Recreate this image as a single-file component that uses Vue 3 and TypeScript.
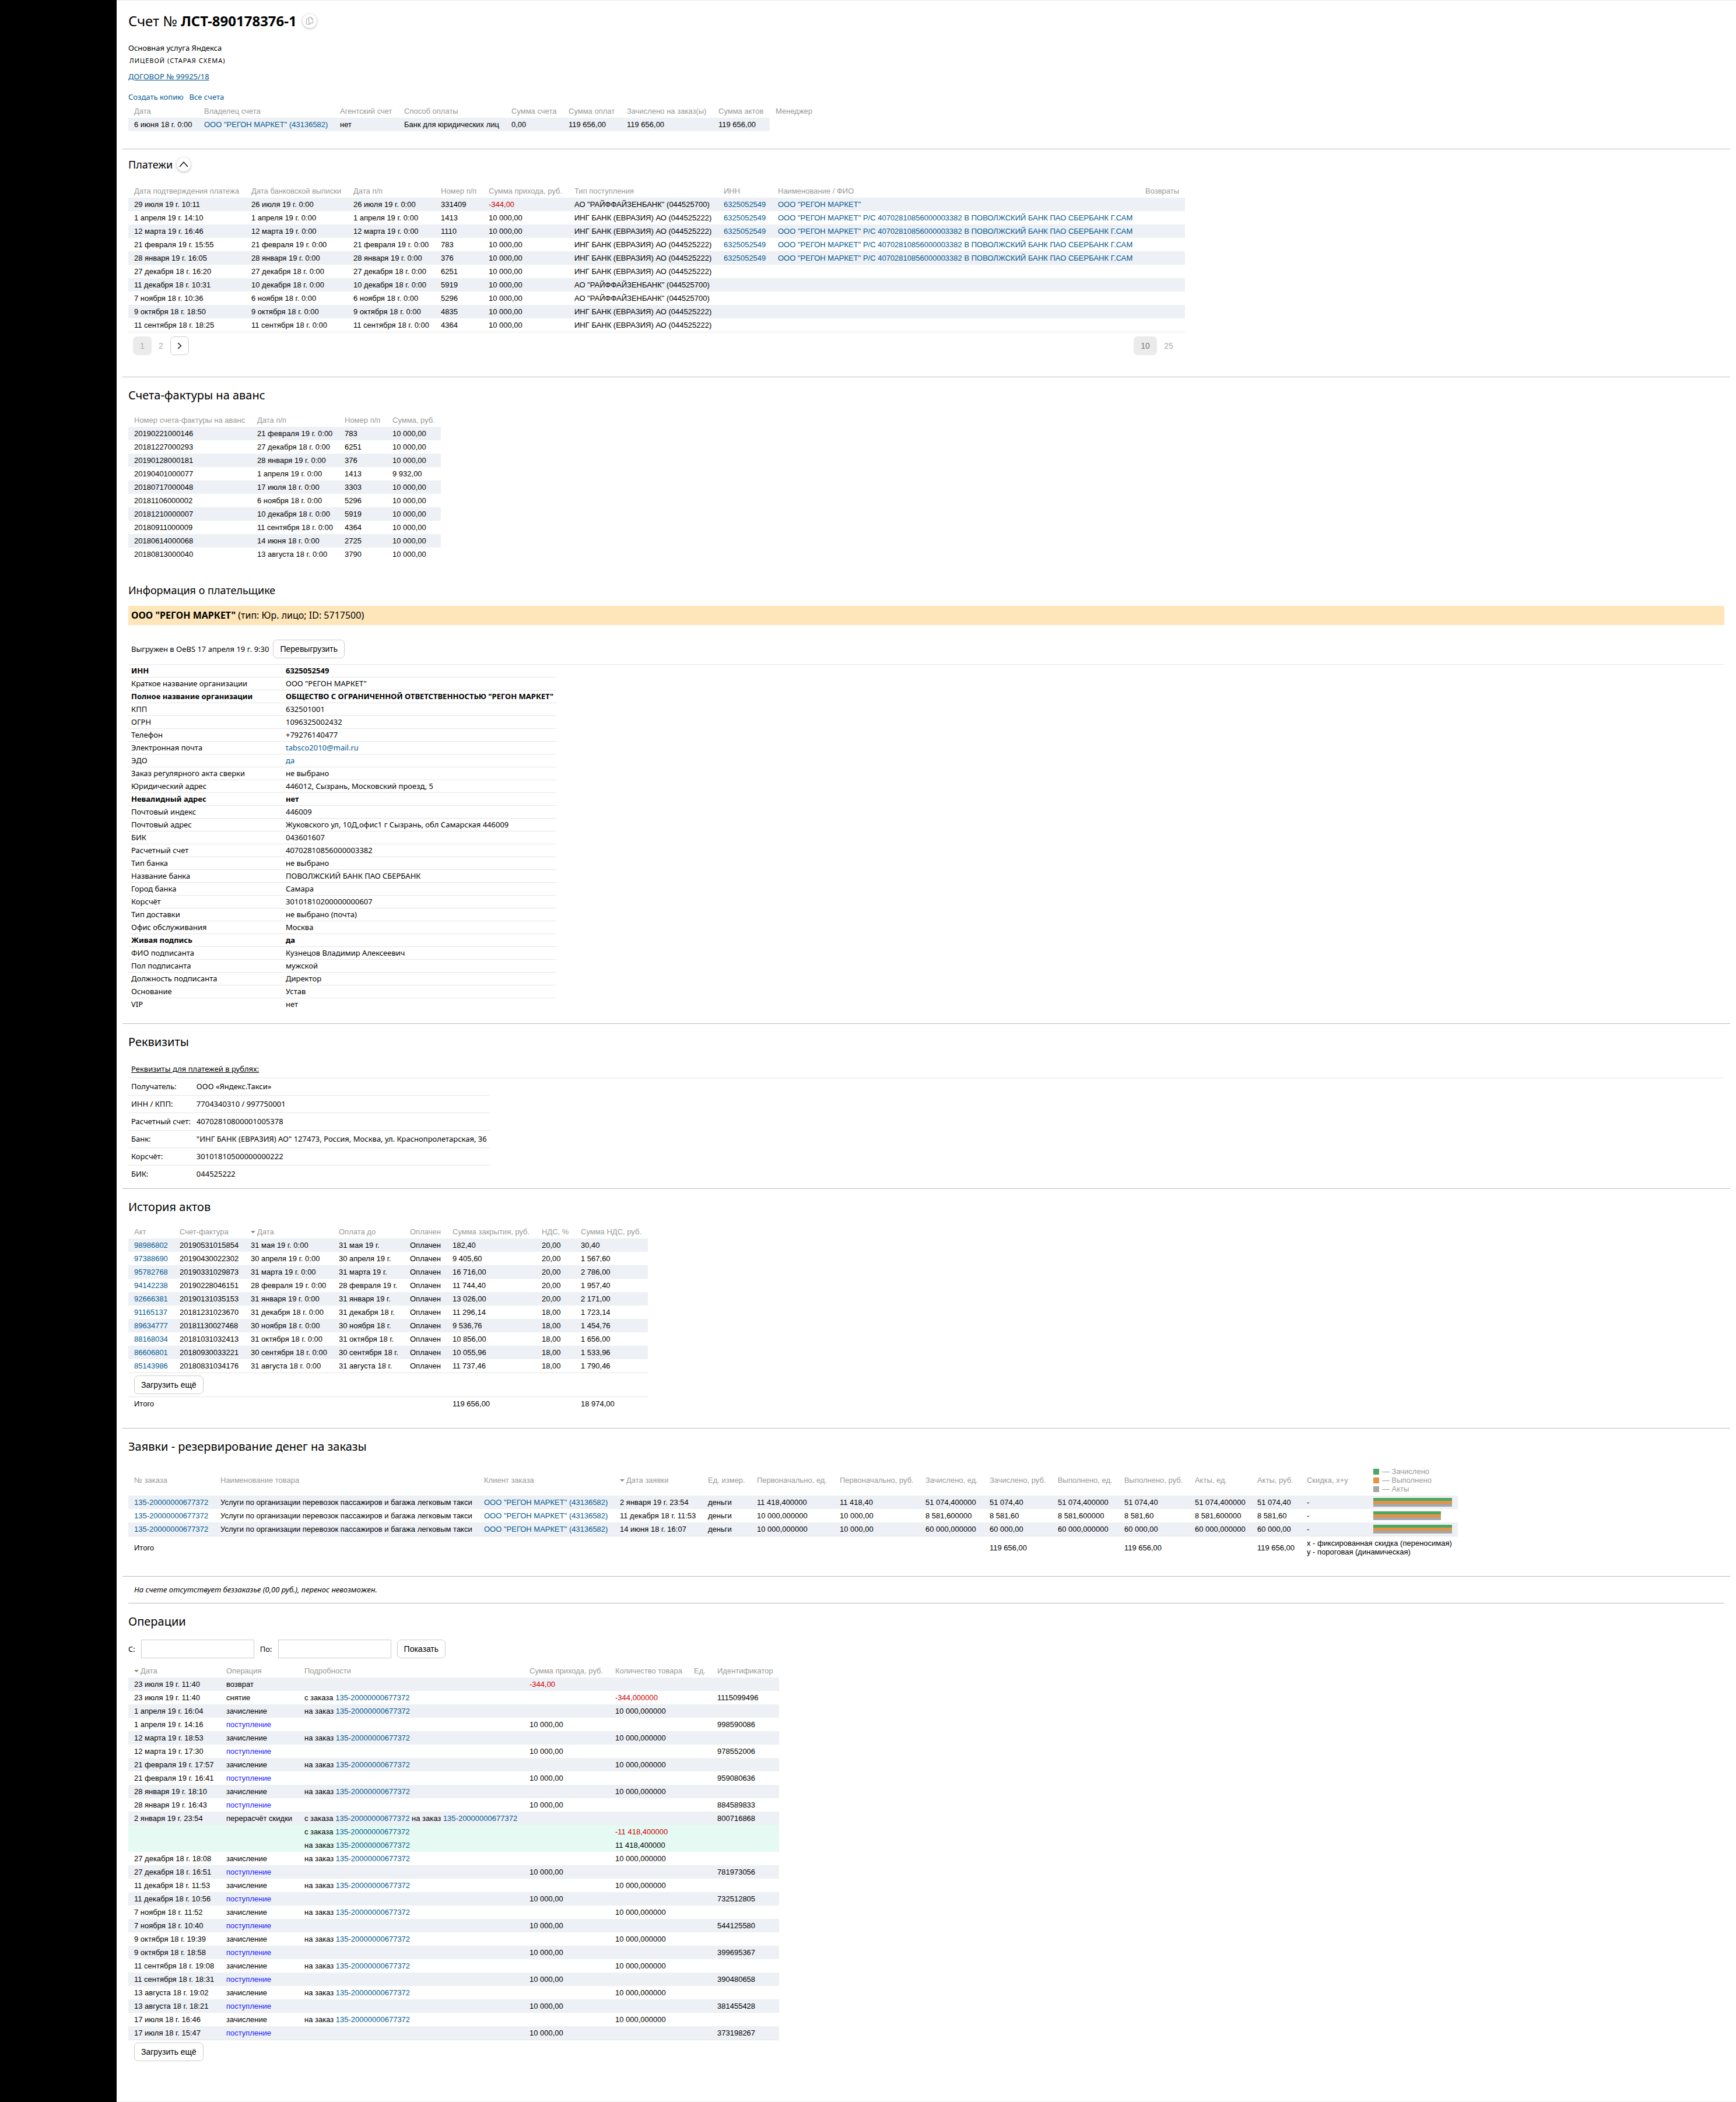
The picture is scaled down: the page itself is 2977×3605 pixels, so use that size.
<script setup lang="ts">
import { ref } from 'vue'

interface Payment {
  confirmed: string
  statement: string
  order: string
  num: string
  sum: string
  type: string
  inn: string
  name: string
}

interface Order {
  date: string
  initial: string
  credited: string
  share: number
}

interface Operation {
  date: string
  kind: string
  details: string[]
  sum: string
  qty: string
  id: string
  sub?: boolean
}

const ORDER_ID = '135-20000000677372'
const CLIENT = 'ООО "РЕГОН МАРКЕТ" (43136582)'
const ING = 'ИНГ БАНК (ЕВРАЗИЯ) АО (044525222)'
const RAIF = 'АО "РАЙФФАЙЗЕНБАНК" (044525700)'
const INN = '6325052549'
const PAYER = 'ООО "РЕГОН МАРКЕТ"'
const PAYER_FULL = 'ООО "РЕГОН МАРКЕТ" Р/С 40702810856000003382 В ПОВОЛЖСКИЙ БАНК ПАО СБЕРБАНК Г.САМ'

const isNegative = (value: string): boolean => value.startsWith('-')

/* column widths of the data tables, in pixels */
const columns = {
  summary: [120, 233, 110, 184, 98, 100, 157, 98, 90],
  payments: [201, 175, 150, 82, 147, 256, 93, 630, 78],
  invoices: [211, 150, 82, 83],
  acts: [78, 122, 151, 122, 73, 153, 67, 125],
  orders: [148, 452, 233, 151, 84, 142, 147, 109, 117, 114, 121, 107, 85, 114, 155],
  operations: [158, 134, 386, 147, 135, 40, 106],
}

const summaryHead = ['Дата', 'Владелец счета', 'Агентский счет', 'Способ оплаты', 'Сумма счета', 'Сумма оплат', 'Зачислено на заказ(ы)', 'Сумма актов', 'Менеджер']

const paymentHead = ['Дата подтверждения платежа', 'Дата банковской выписки', 'Дата п/п', 'Номер п/п', 'Сумма прихода, руб.', 'Тип поступления', 'ИНН', 'Наименование / ФИО', 'Возвраты']

const payments: Payment[] = ([
  ['29 июля 19 г. 10:11', '26 июля 19 г. 0:00', '26 июля 19 г. 0:00', '331409', '-344,00', RAIF, INN, PAYER],
  ['1 апреля 19 г. 14:10', '1 апреля 19 г. 0:00', '1 апреля 19 г. 0:00', '1413', '10 000,00', ING, INN, PAYER_FULL],
  ['12 марта 19 г. 16:46', '12 марта 19 г. 0:00', '12 марта 19 г. 0:00', '1110', '10 000,00', ING, INN, PAYER_FULL],
  ['21 февраля 19 г. 15:55', '21 февраля 19 г. 0:00', '21 февраля 19 г. 0:00', '783', '10 000,00', ING, INN, PAYER_FULL],
  ['28 января 19 г. 16:05', '28 января 19 г. 0:00', '28 января 19 г. 0:00', '376', '10 000,00', ING, INN, PAYER_FULL],
  ['27 декабря 18 г. 16:20', '27 декабря 18 г. 0:00', '27 декабря 18 г. 0:00', '6251', '10 000,00', ING, '', ''],
  ['11 декабря 18 г. 10:31', '10 декабря 18 г. 0:00', '10 декабря 18 г. 0:00', '5919', '10 000,00', RAIF, '', ''],
  ['7 ноября 18 г. 10:36', '6 ноября 18 г. 0:00', '6 ноября 18 г. 0:00', '5296', '10 000,00', RAIF, '', ''],
  ['9 октября 18 г. 18:50', '9 октября 18 г. 0:00', '9 октября 18 г. 0:00', '4835', '10 000,00', ING, '', ''],
  ['11 сентября 18 г. 18:25', '11 сентября 18 г. 0:00', '11 сентября 18 г. 0:00', '4364', '10 000,00', ING, '', ''],
] as string[][]).map(([confirmed, statement, order, num, sum, type, inn, name]) => ({ confirmed, statement, order, num, sum, type, inn, name }))

const invoiceHead = ['Номер счета-фактуры на аванс', 'Дата п/п', 'Номер п/п', 'Сумма, руб.']
const invoices: string[][] = [
  ['20190221000146', '21 февраля 19 г. 0:00', '783', '10 000,00'],
  ['20181227000293', '27 декабря 18 г. 0:00', '6251', '10 000,00'],
  ['20190128000181', '28 января 19 г. 0:00', '376', '10 000,00'],
  ['20190401000077', '1 апреля 19 г. 0:00', '1413', '9 932,00'],
  ['20180717000048', '17 июля 18 г. 0:00', '3303', '10 000,00'],
  ['20181106000002', '6 ноября 18 г. 0:00', '5296', '10 000,00'],
  ['20181210000007', '10 декабря 18 г. 0:00', '5919', '10 000,00'],
  ['20180911000009', '11 сентября 18 г. 0:00', '4364', '10 000,00'],
  ['20180614000068', '14 июня 18 г. 0:00', '2725', '10 000,00'],
  ['20180813000040', '13 августа 18 г. 0:00', '3790', '10 000,00'],
]

const payer: { label: string; value: string; bold?: boolean; link?: boolean }[] = [
  { label: 'ИНН', value: INN, bold: true },
  { label: 'Краткое название организации', value: PAYER },
  { label: 'Полное название организации', value: 'ОБЩЕСТВО С ОГРАНИЧЕННОЙ ОТВЕТСТВЕННОСТЬЮ "РЕГОН МАРКЕТ"', bold: true },
  { label: 'КПП', value: '632501001' },
  { label: 'ОГРН', value: '1096325002432' },
  { label: 'Телефон', value: '+79276140477' },
  { label: 'Электронная почта', value: 'tabsco2010@mail.ru', link: true },
  { label: 'ЭДО', value: 'да', link: true },
  { label: 'Заказ регулярного акта сверки', value: 'не выбрано' },
  { label: 'Юридический адрес', value: '446012, Сызрань, Московский проезд, 5' },
  { label: 'Невалидный адрес', value: 'нет', bold: true },
  { label: 'Почтовый индекс', value: '446009' },
  { label: 'Почтовый адрес', value: 'Жуковского ул, 10Д,офис1 г Сызрань, обл Самарская 446009' },
  { label: 'БИК', value: '043601607' },
  { label: 'Расчетный счет', value: '40702810856000003382' },
  { label: 'Тип банка', value: 'не выбрано' },
  { label: 'Название банка', value: 'ПОВОЛЖСКИЙ БАНК ПАО СБЕРБАНК' },
  { label: 'Город банка', value: 'Самара' },
  { label: 'Корсчёт', value: '30101810200000000607' },
  { label: 'Тип доставки', value: 'не выбрано (почта)' },
  { label: 'Офис обслуживания', value: 'Москва' },
  { label: 'Живая подпись', value: 'да', bold: true },
  { label: 'ФИО подписанта', value: 'Кузнецов Владимир Алексеевич' },
  { label: 'Пол подписанта', value: 'мужской' },
  { label: 'Должность подписанта', value: 'Директор' },
  { label: 'Основание', value: 'Устав' },
  { label: 'VIP', value: 'нет' },
]

const requisites: string[][] = [
  ['Получатель:', 'ООО «Яндекс.Такси»'],
  ['ИНН / КПП:', '7704340310 / 997750001'],
  ['Расчетный счет:', '40702810800001005378'],
  ['Банк:', '"ИНГ БАНК (ЕВРАЗИЯ) АО" 127473, Россия, Москва, ул. Краснопролетарская, 36'],
  ['Корсчёт:', '30101810500000000222'],
  ['БИК:', '044525222'],
]

const acts: string[][] = [
  ['98986802', '20190531015854', '31 мая 19 г. 0:00', '31 мая 19 г.', 'Оплачен', '182,40', '20,00', '30,40'],
  ['97388690', '20190430022302', '30 апреля 19 г. 0:00', '30 апреля 19 г.', 'Оплачен', '9 405,60', '20,00', '1 567,60'],
  ['95782768', '20190331029873', '31 марта 19 г. 0:00', '31 марта 19 г.', 'Оплачен', '16 716,00', '20,00', '2 786,00'],
  ['94142238', '20190228046151', '28 февраля 19 г. 0:00', '28 февраля 19 г.', 'Оплачен', '11 744,40', '20,00', '1 957,40'],
  ['92666381', '20190131035153', '31 января 19 г. 0:00', '31 января 19 г.', 'Оплачен', '13 026,00', '20,00', '2 171,00'],
  ['91165137', '20181231023670', '31 декабря 18 г. 0:00', '31 декабря 18 г.', 'Оплачен', '11 296,14', '18,00', '1 723,14'],
  ['89634777', '20181130027468', '30 ноября 18 г. 0:00', '30 ноября 18 г.', 'Оплачен', '9 536,76', '18,00', '1 454,76'],
  ['88168034', '20181031032413', '31 октября 18 г. 0:00', '31 октября 18 г.', 'Оплачен', '10 856,00', '18,00', '1 656,00'],
  ['86606801', '20180930033221', '30 сентября 18 г. 0:00', '30 сентября 18 г.', 'Оплачен', '10 055,96', '18,00', '1 533,96'],
  ['85143986', '20180831034176', '31 августа 18 г. 0:00', '31 августа 18 г.', 'Оплачен', '11 737,46', '18,00', '1 790,46'],
]

const orders: Order[] = [
  { date: '2 января 19 г. 23:54', initial: '11 418,40', credited: '51 074,40', share: 100 },
  { date: '11 декабря 18 г. 11:53', initial: '10 000,00', credited: '8 581,60', share: 86 },
  { date: '14 июня 18 г. 16:07', initial: '10 000,00', credited: '60 000,00', share: 100 },
]

const credit = (date: string): Operation => ({ date, kind: 'зачисление', details: ['на заказ'], sum: '', qty: '10 000,000000', id: '' })
const income = (date: string, id: string): Operation => ({ date, kind: 'поступление', details: [], sum: '10 000,00', qty: '', id })

const operations: Operation[] = [
  { date: '23 июля 19 г. 11:40', kind: 'возврат', details: [], sum: '-344,00', qty: '', id: '' },
  { date: '23 июля 19 г. 11:40', kind: 'снятие', details: ['с заказа'], sum: '', qty: '-344,000000', id: '1115099496' },
  credit('1 апреля 19 г. 16:04'),
  income('1 апреля 19 г. 14:16', '998590086'),
  credit('12 марта 19 г. 18:53'),
  income('12 марта 19 г. 17:30', '978552006'),
  credit('21 февраля 19 г. 17:57'),
  income('21 февраля 19 г. 16:41', '959080636'),
  credit('28 января 19 г. 18:10'),
  income('28 января 19 г. 16:43', '884589833'),
  { date: '2 января 19 г. 23:54', kind: 'перерасчёт скидки', details: ['с заказа', 'на заказ'], sum: '', qty: '', id: '800716868' },
  { date: '', kind: '', details: ['с заказа'], sum: '', qty: '-11 418,400000', id: '', sub: true },
  { date: '', kind: '', details: ['на заказ'], sum: '', qty: '11 418,400000', id: '', sub: true },
  credit('27 декабря 18 г. 18:08'),
  income('27 декабря 18 г. 16:51', '781973056'),
  credit('11 декабря 18 г. 11:53'),
  income('11 декабря 18 г. 10:56', '732512805'),
  credit('7 ноября 18 г. 11:52'),
  income('7 ноября 18 г. 10:40', '544125580'),
  credit('9 октября 18 г. 19:39'),
  income('9 октября 18 г. 18:58', '399695367'),
  credit('11 сентября 18 г. 19:08'),
  income('11 сентября 18 г. 18:31', '390480658'),
  credit('13 августа 18 г. 19:02'),
  income('13 августа 18 г. 18:21', '381455428'),
  credit('17 июля 18 г. 16:46'),
  income('17 июля 18 г. 15:47', '373198267'),
]

const page = ref(1)
const pageSize = ref(10)
const dateFrom = ref('')
const dateTo = ref('')
</script>

<template>
  <div class="layout">
    <aside class="rail"></aside>
    <main class="page">
      <section class="block intro">
        <h1 class="title">
          <span>Счет № <b>ЛСТ-890178376-1</b></span>
          <button class="round" type="button" aria-label="Скопировать">
            <svg width="14" height="14" viewBox="0 0 14 14" fill="none" stroke="#aaa" stroke-width="1">
              <path d="M5.5 .5h4l3 3v7h-7z" />
              <path d="M9.5 .5v3h3" />
              <path d="M5.5 3.5h-4v9h7v-2" />
            </svg>
          </button>
        </h1>
        <p class="service">Основная услуга Яндекса</p>
        <p class="scheme">ЛИЦЕВОЙ (СТАРАЯ СХЕМА)</p>
        <p class="contract"><a class="underlined" href="#contract">ДОГОВОР № 99925/18</a></p>
        <p class="actions"><a href="#copy">Создать копию</a><a href="#all">Все счета</a></p>
        <table class="grid">
          <colgroup><col v-for="(w, i) in columns.summary" :key="i" :style="{ width: w + 'px' }"></colgroup>
          <thead>
            <tr><th v-for="h in summaryHead" :key="h">{{ h }}</th></tr>
          </thead>
          <tbody>
            <tr>
              <td>6 июня 18 г. 0:00</td>
              <td><a href="#client">{{ CLIENT }}</a></td>
              <td>нет</td>
              <td>Банк для юридических лиц</td>
              <td>0,00</td>
              <td>119 656,00</td>
              <td>119 656,00</td>
              <td>119 656,00</td>
            </tr>
          </tbody>
        </table>
      </section>

      <section class="block ruled payments">
        <h2 class="small">
          <span>Платежи</span>
          <button class="round" type="button" aria-label="Свернуть">
            <svg width="16" height="16" viewBox="0 0 16 16" fill="none" stroke="#000" stroke-width="1.3">
              <path d="M1 12l7-8 7 8" />
            </svg>
          </button>
        </h2>
        <div class="fit">
          <table class="grid lined">
            <colgroup><col v-for="(w, i) in columns.payments" :key="i" :style="{ width: w + 'px' }"></colgroup>
            <thead>
              <tr><th v-for="h in paymentHead" :key="h">{{ h }}</th></tr>
            </thead>
            <tbody>
              <tr v-for="p in payments" :key="p.confirmed">
                <td>{{ p.confirmed }}</td>
                <td>{{ p.statement }}</td>
                <td>{{ p.order }}</td>
                <td>{{ p.num }}</td>
                <td :class="{ negative: isNegative(p.sum) }">{{ p.sum }}</td>
                <td>{{ p.type }}</td>
                <td><a v-if="p.inn" href="#inn">{{ p.inn }}</a></td>
                <td><a v-if="p.name" href="#payer">{{ p.name }}</a></td>
                <td></td>
              </tr>
            </tbody>
          </table>
          <nav class="pager">
            <div class="pages">
              <button v-for="n in [1, 2]" :key="n" type="button" class="page-btn" :class="{ current: n === page }" @click="page = n">{{ n }}</button>
              <button type="button" class="page-btn next" aria-label="Следующая" @click="page = 2">
                <svg width="8" height="12" viewBox="0 0 8 12" fill="none" stroke="#000" stroke-width="1.3">
                  <path d="M1 1l5.5 5L1 11" />
                </svg>
              </button>
            </div>
            <div class="pages sizes">
              <button v-for="n in [10, 25]" :key="n" type="button" class="page-btn wide" :class="{ current: n === pageSize }" @click="pageSize = n">{{ n }}</button>
            </div>
          </nav>
        </div>
      </section>

      <section class="block ruled">
        <h2>Счета-фактуры на аванс</h2>
        <table class="grid">
          <colgroup><col v-for="(w, i) in columns.invoices" :key="i" :style="{ width: w + 'px' }"></colgroup>
          <thead>
            <tr><th v-for="h in invoiceHead" :key="h">{{ h }}</th></tr>
          </thead>
          <tbody>
            <tr v-for="row in invoices" :key="row[0]">
              <td v-for="(cell, i) in row" :key="i">{{ cell }}</td>
            </tr>
          </tbody>
        </table>
      </section>

      <section class="block payer">
        <h2 class="small">Информация о плательщике</h2>
        <p class="banner"><b>ООО "РЕГОН МАРКЕТ"</b> (тип: Юр. лицо; ID: 5717500)</p>
        <div class="upload">
          <span>Выгружен в OeBS 17 апреля 19 г. 9:30</span>
          <button class="btn" type="button">Перевыгрузить</button>
        </div>
        <table class="facts">
          <tbody>
            <tr v-for="f in payer" :key="f.label" :class="{ strong: f.bold }">
              <th scope="row">{{ f.label }}</th>
              <td><a v-if="f.link" href="#payer-info">{{ f.value }}</a><template v-else>{{ f.value }}</template></td>
            </tr>
          </tbody>
        </table>
      </section>

      <section class="block ruled requisites">
        <h2>Реквизиты</h2>
        <p class="caption"><u>Реквизиты для платежей в рублях:</u></p>
        <table class="facts tall">
          <tbody>
            <tr v-for="r in requisites" :key="r[0]">
              <th scope="row">{{ r[0] }}</th>
              <td>{{ r[1] }}</td>
            </tr>
          </tbody>
        </table>
      </section>

      <section class="block ruled">
        <h2>История актов</h2>
        <table class="grid lined">
          <colgroup><col v-for="(w, i) in columns.acts" :key="i" :style="{ width: w + 'px' }"></colgroup>
          <thead>
            <tr>
              <th>Акт</th>
              <th>Счет-фактура</th>
              <th><span class="sort">Дата</span></th>
              <th>Оплата до</th>
              <th>Оплачен</th>
              <th>Сумма закрытия, руб.</th>
              <th>НДС, %</th>
              <th>Сумма НДС, руб.</th>
            </tr>
          </thead>
          <tbody>
            <tr v-for="a in acts" :key="a[0]">
              <td v-for="(cell, i) in a" :key="i"><a v-if="i === 0" href="#act">{{ cell }}</a><template v-else>{{ cell }}</template></td>
            </tr>
          </tbody>
          <tfoot>
            <tr class="more"><td colspan="8"><button class="btn" type="button">Загрузить ещё</button></td></tr>
            <tr>
              <td colspan="5">Итого</td>
              <td>119 656,00</td>
              <td></td>
              <td>18 974,00</td>
            </tr>
          </tfoot>
        </table>
      </section>

      <section class="block ruled">
        <h2>Заявки - резервирование денег на заказы</h2>
        <table class="grid lined">
          <colgroup><col v-for="(w, i) in columns.orders" :key="i" :style="{ width: w + 'px' }"></colgroup>
          <thead>
            <tr>
              <th>№ заказа</th>
              <th>Наименование товара</th>
              <th>Клиент заказа</th>
              <th><span class="sort">Дата заявки</span></th>
              <th>Ед. измер.</th>
              <th>Первоначально, ед.</th>
              <th>Первоначально, руб.</th>
              <th>Зачислено, ед.</th>
              <th>Зачислено, руб.</th>
              <th>Выполнено, ед.</th>
              <th>Выполнено, руб.</th>
              <th>Акты, ед.</th>
              <th>Акты, руб.</th>
              <th>Скидка, x+y</th>
              <th>
                <span class="legend green">— Зачислено</span>
                <span class="legend orange">— Выполнено</span>
                <span class="legend gray">— Акты</span>
              </th>
            </tr>
          </thead>
          <tbody>
            <tr v-for="o in orders" :key="o.date">
              <td><a href="#order">{{ ORDER_ID }}</a></td>
              <td>Услуги по организации перевозок пассажиров и багажа легковым такси</td>
              <td><a href="#client">{{ CLIENT }}</a></td>
              <td>{{ o.date }}</td>
              <td>деньги</td>
              <td>{{ o.initial }}0000</td>
              <td>{{ o.initial }}</td>
              <td>{{ o.credited }}0000</td>
              <td>{{ o.credited }}</td>
              <td>{{ o.credited }}0000</td>
              <td>{{ o.credited }}</td>
              <td>{{ o.credited }}0000</td>
              <td>{{ o.credited }}</td>
              <td>-</td>
              <td>
                <div class="bars" :style="{ width: o.share + '%' }">
                  <i class="green"></i><i class="orange"></i><i class="gray"></i>
                </div>
              </td>
            </tr>
          </tbody>
          <tfoot>
            <tr>
              <td colspan="8">Итого</td>
              <td colspan="2">119 656,00</td>
              <td colspan="2">119 656,00</td>
              <td>119 656,00</td>
              <td colspan="2">x - фиксированная скидка (переносимая)<br>y - пороговая (динамическая)</td>
            </tr>
          </tfoot>
        </table>
      </section>

      <section class="block ruled transfer">
        <p><em>На счете отсутствует беззаказье (0,00 руб.), перенос невозможен.</em></p>
      </section>

      <section class="block operations">
        <h2>Операции</h2>
        <form class="filter" @submit.prevent>
          <label for="from">С:</label>
          <input id="from" v-model="dateFrom" type="text">
          <label for="to">По:</label>
          <input id="to" v-model="dateTo" type="text">
          <button class="btn" type="submit">Показать</button>
        </form>
        <table class="grid lined">
          <colgroup><col v-for="(w, i) in columns.operations" :key="i" :style="{ width: w + 'px' }"></colgroup>
          <thead>
            <tr>
              <th><span class="sort">Дата</span></th>
              <th>Операция</th>
              <th>Подробности</th>
              <th>Сумма прихода, руб.</th>
              <th>Количество товара</th>
              <th>Ед.</th>
              <th>Идентификатор</th>
            </tr>
          </thead>
          <tbody>
            <tr v-for="(o, i) in operations" :key="i" :class="{ sub: o.sub }">
              <td>{{ o.date }}</td>
              <td><a v-if="o.kind === 'поступление'" class="income" href="#income">{{ o.kind }}</a><template v-else>{{ o.kind }}</template></td>
              <td><template v-for="d in o.details" :key="d">{{ d }} <a href="#order">{{ ORDER_ID }}</a>{{ ' ' }}</template></td>
              <td :class="{ negative: isNegative(o.sum) }">{{ o.sum }}</td>
              <td :class="{ negative: isNegative(o.qty) }">{{ o.qty }}</td>
              <td></td>
              <td>{{ o.id }}</td>
            </tr>
          </tbody>
          <tfoot>
            <tr class="more"><td colspan="7"><button class="btn" type="button">Загрузить ещё</button></td></tr>
          </tfoot>
        </table>
      </section>
    </main>
  </div>
</template>

<style>
body {
  margin: 0;
  background: #fff;
}
</style>

<style scoped>
.layout {
  display: flex;
  min-height: 100vh;
  font: 13px/20px "Noto Sans", "Open Sans", sans-serif;
  color: #000;
}

.rail {
  flex: 0 0 200px;
  background: #000;
}

.page {
  flex: 1;
  min-width: 0;
  box-sizing: border-box;
  padding: 0 10px;
  border: solid #ebebeb;
  border-width: 1px 0;
}

.block {
  padding: 0 10px 30px;
}

.ruled {
  border-top: 1px solid #bbb;
  padding-top: 17px;
}

h1,
h2,
p {
  margin: 0;
}

h2 {
  margin-bottom: 17px;
  font-size: 20px;
  font-weight: 400;
  line-height: 28px;
}

h2.small {
  font-size: 18px;
}

a {
  color: #045a91;
  text-decoration: none;
}

a.income {
  color: #1a1aff;
}

.underlined {
  text-decoration: underline;
}

.negative {
  color: #c00;
}

.intro {
  padding-top: 19px;
}

.title {
  display: flex;
  align-items: center;
  gap: 10px;
  margin-bottom: 20px;
  font-size: 24px;
  font-weight: 400;
  line-height: 32px;
}

.round {
  display: flex;
  align-items: center;
  justify-content: center;
  width: 24px;
  height: 24px;
  padding: 0;
  border: 0;
  border-radius: 50%;
  background: #fff;
  box-shadow: 0 1px 4px rgba(0, 0, 0, 0.3);
}

.scheme {
  margin-top: 2px;
  padding-left: 2px;
  font-size: 11px;
  letter-spacing: 1px;
}

.contract {
  margin-top: 7px;
}

.actions {
  display: flex;
  gap: 10px;
  margin: 15px 0 3px;
}

/* data tables */
.grid {
  border-collapse: separate;
  border-spacing: 0;
  font: 13px/15px "Liberation Sans", Arial, sans-serif;
}

.grid th,
.grid td {
  padding: 4px 10px;
  text-align: left;
  white-space: nowrap;
}

.grid tbody td {
  height: 15px;
}

.grid th {
  color: #999;
  font-weight: 400;
}

.grid tbody tr:nth-child(odd) td {
  background: #edf0f5;
}

.grid tbody tr.sub td {
  background: #e4faf2;
}

.lined tbody tr:last-child td {
  border-bottom: 1px solid #e6e6e6;
}

.lined tfoot .more:not(:last-child) td {
  border-bottom: 1px solid #e6e6e6;
}

.sort {
  display: flex;
  align-items: center;
  gap: 3px;
}

.sort::before {
  content: "";
  border: solid transparent;
  border-width: 4px 4px 0;
  border-top-color: #888;
}

.payments {
  padding-top: 12px;
  padding-bottom: 37px;
}

.payments h2 {
  display: flex;
  align-items: center;
  gap: 7px;
  margin-bottom: 20px;
}

.fit {
  width: fit-content;
}

.pager {
  display: flex;
  justify-content: space-between;
  padding: 7px 8px 0;
}

.pages {
  display: flex;
}

.page-btn {
  display: flex;
  align-items: center;
  justify-content: center;
  box-sizing: border-box;
  width: 32px;
  height: 32px;
  padding: 0;
  border: 0;
  border-radius: 7px;
  background: none;
  color: #aaa;
  font: 14px/18px "Liberation Sans", Arial, sans-serif;
}

.page-btn.wide {
  width: 40px;
}

.page-btn.current {
  background: #ebebeb;
}

.sizes .current {
  color: #777;
}

.page-btn.next {
  border: 1px solid #ccc;
}

.btn {
  display: block;
  box-sizing: border-box;
  height: 32px;
  padding: 0 11px;
  border: 1px solid #ccc;
  border-radius: 7px;
  background: #fff;
  color: #000;
  font: 14px/18px "Liberation Sans", Arial, sans-serif;
}

.payer {
  padding-top: 6px;
  padding-bottom: 22px;
}

.payer h2 {
  margin-bottom: 13px;
}

.banner {
  padding: 0 5px;
  background: #ffe6ba;
  font-size: 16px;
  line-height: 33px;
}

.upload {
  display: flex;
  align-items: center;
  gap: 7px;
  margin-top: 25px;
  padding: 0 5px 10px;
  border-bottom: 1px solid #e6e6e6;
}

.facts {
  border-collapse: separate;
  border-spacing: 0;
  line-height: 21px;
}

.facts th,
.facts td {
  padding: 0 5px;
  border-bottom: 1px solid #e6e6e6;
  font-weight: 400;
  text-align: left;
  white-space: nowrap;
}

.facts tr:last-child > * {
  border-bottom: 0;
}

.facts .strong > * {
  font-weight: 700;
}

.payer .facts th {
  min-width: 255px;
}

.tall {
  line-height: 29px;
}

.requisites {
  padding-bottom: 10px;
}

.requisites h2 {
  margin-bottom: 22px;
}

.caption {
  padding: 0 5px 5px;
  border-bottom: 1px solid #e6e6e6;
}

.legend {
  display: flex;
  align-items: center;
  gap: 5px;
}

.legend::before {
  content: "";
  width: 10px;
  height: 10px;
}

.bars i {
  display: block;
  height: 5px;
}

.green::before,
i.green {
  background: #4ca861;
}

.orange::before,
i.orange {
  background: #e59243;
}

.gray::before,
i.gray {
  background: #a6a6a6;
}

.transfer {
  padding-top: 12px;
  padding-bottom: 13px;
}

.transfer p {
  padding-left: 10px;
}

.operations {
  margin: 0 10px;
  padding: 17px 0 0;
  border-top: 1px solid #bbb;
}

.filter {
  display: flex;
  align-items: center;
  gap: 10px;
  margin-bottom: 10px;
}

.filter input {
  box-sizing: border-box;
  width: 194px;
  height: 32px;
  padding: 0 8px;
  border: 1px solid #ccc;
  background: #fff;
  font: inherit;
}
</style>
